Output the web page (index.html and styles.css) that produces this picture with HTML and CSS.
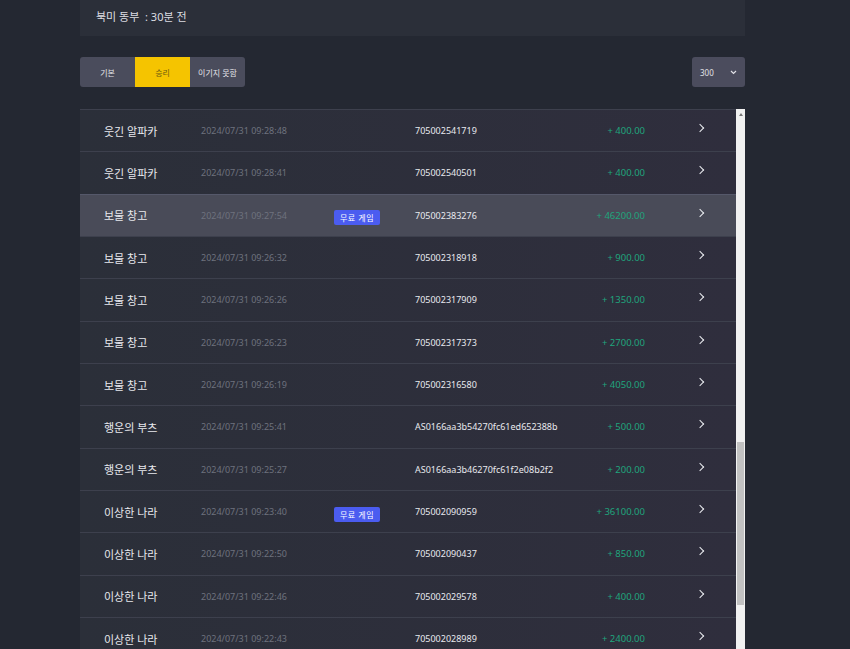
FILE: index.html
```html
<!DOCTYPE html>
<html lang="ko">
<head>
	<meta charset="UTF-8">
	<title>기록</title>
	<link rel="stylesheet" href="styles.css">
</head>
<body>
	<div class="wrap">
		<div class="header">북미 동부&nbsp;&nbsp;: 30분 전</div>

		<div class="toolbar">
			<div class="tabs">
				<div class="tab">기본</div>
				<div class="tab active">승리</div>
				<div class="tab">이기지 못함</div>
			</div>
			<div class="select">
				<span>300</span>
				<svg width="7" height="5" viewBox="0 0 7 5"><path d="M1 1 L3.5 3.5 L6 1" fill="none" stroke="#e0e0e6" stroke-width="1.2"/></svg>
			</div>
		</div>

		<div class="list">
			<div class="rows">
				<div class="row"><span class="name">웃긴 알파카</span><span class="date">2024/07/31 09:28:48</span><span></span><span class="id">705002541719</span><span class="amount">+ 400.00</span><span class="chev"></span></div>
				<div class="row"><span class="name">웃긴 알파카</span><span class="date">2024/07/31 09:28:41</span><span></span><span class="id">705002540501</span><span class="amount">+ 400.00</span><span class="chev"></span></div>
				<div class="row selected"><span class="name">보물 창고</span><span class="date">2024/07/31 09:27:54</span><span><span class="badge">무료 게임</span></span><span class="id">705002383276</span><span class="amount">+ 46200.00</span><span class="chev"></span></div>
				<div class="row"><span class="name">보물 창고</span><span class="date">2024/07/31 09:26:32</span><span></span><span class="id">705002318918</span><span class="amount">+ 900.00</span><span class="chev"></span></div>
				<div class="row"><span class="name">보물 창고</span><span class="date">2024/07/31 09:26:26</span><span></span><span class="id">705002317909</span><span class="amount">+ 1350.00</span><span class="chev"></span></div>
				<div class="row"><span class="name">보물 창고</span><span class="date">2024/07/31 09:26:23</span><span></span><span class="id">705002317373</span><span class="amount">+ 2700.00</span><span class="chev"></span></div>
				<div class="row"><span class="name">보물 창고</span><span class="date">2024/07/31 09:26:19</span><span></span><span class="id">705002316580</span><span class="amount">+ 4050.00</span><span class="chev"></span></div>
				<div class="row"><span class="name">행운의 부츠</span><span class="date">2024/07/31 09:25:41</span><span></span><span class="id">AS0166aa3b54270fc61ed652388b</span><span class="amount">+ 500.00</span><span class="chev"></span></div>
				<div class="row"><span class="name">행운의 부츠</span><span class="date">2024/07/31 09:25:27</span><span></span><span class="id">AS0166aa3b46270fc61f2e08b2f2</span><span class="amount">+ 200.00</span><span class="chev"></span></div>
				<div class="row"><span class="name">이상한 나라</span><span class="date">2024/07/31 09:23:40</span><span><span class="badge">무료 게임</span></span><span class="id">705002090959</span><span class="amount">+ 36100.00</span><span class="chev"></span></div>
				<div class="row"><span class="name">이상한 나라</span><span class="date">2024/07/31 09:22:50</span><span></span><span class="id">705002090437</span><span class="amount">+ 850.00</span><span class="chev"></span></div>
				<div class="row"><span class="name">이상한 나라</span><span class="date">2024/07/31 09:22:46</span><span></span><span class="id">705002029578</span><span class="amount">+ 400.00</span><span class="chev"></span></div>
				<div class="row"><span class="name">이상한 나라</span><span class="date">2024/07/31 09:22:43</span><span></span><span class="id">705002028989</span><span class="amount">+ 2400.00</span><span class="chev"></span></div>
			</div>
			<div class="scrollbar">
				<div class="arrow"></div>
				<div class="thumb"></div>
			</div>
		</div>
	</div>
</body>
</html>
```

FILE: styles.css
```css
html, body {
	height: 100%;
	overflow: hidden;
}
body {
	margin: 0;
	background: #242832;
	font-family: "Noto Sans", "Noto Sans CJK KR", sans-serif;
	color: #e4e5ea;
}
.wrap {
	width: 665px;
	margin-left: 80px;
}

.header {
	height: 36px;
	background: #2b2f39;
	padding-left: 16px;
	display: flex;
	align-items: center;
	font-size: 11px;
	color: #dcdde2;
	padding-bottom: 4px;
	box-sizing: border-box;
}

/* tabs + page size */
.toolbar {
	margin-top: 21px;
	height: 30px;
	display: flex;
	justify-content: space-between;
}
.tabs {
	display: flex;
	border-radius: 3px;
	overflow: hidden;
}
.tab {
	width: 55px;
	display: flex;
	justify-content: center;
	align-items: center;
	background: #4a4c5c;
	font-size: 8px;
	color: #e2e3e8;
}
.tab.active {
	background: #f5c400;
	color: #6b5a10;
}
.select {
	width: 53px;
	background: #4b4c5d;
	border-radius: 3px;
	display: flex;
	justify-content: space-between;
	align-items: center;
	padding: 0 8px;
	box-sizing: border-box;
	font-size: 8px;
	color: #e0e1e6;
}

/* list */
.list {
	margin-top: 22px;
	height: 540px;
	display: flex;
}
.rows {
	flex: 1;
	overflow: hidden;
}
.row {
	height: 42.33px;
	box-sizing: border-box;
	border-top: 1px solid #3d404d;
	background: linear-gradient(90deg, #2b2f39, #2f2e3d);
	padding-left: 24px;
	display: grid;
	grid-template-columns: 97px 133px 81px 150px 80px 60px;
	align-items: center;
}
.row.selected {
	background: #494b58;
	border-top-color: #55586a;
}
.name {
	font-size: 11px;
	color: #e8e9ee;
}
.date {
	font-size: 9px;
	color: #6e727e;
}
.badge {
	display: inline-block;
	background: #4b5cf0;
	color: #fff;
	font-size: 8px;
	padding: 2px 6px;
	border-radius: 2px;
	letter-spacing: 0.5px;
}
.id {
	font-size: 9px;
	color: #e8e9ee;
	white-space: nowrap;
}
.amount {
	font-size: 9.5px;
	color: #1fa57c;
	text-align: right;
}
.chev {
	justify-self: end;
	width: 5px;
	height: 5px;
	border-top: 1.5px solid #eceef2;
	border-right: 1.5px solid #eceef2;
	transform: rotate(45deg);
	margin-right: 2px;
	margin-bottom: 5px;
}

/* drawn scrollbar */
.scrollbar {
	width: 9px;
	background: #f1f1f1;
	display: flex;
	flex-direction: column;
	align-items: center;
}
.arrow {
	margin-top: 4px;
	width: 0;
	height: 0;
	border-left: 2px solid transparent;
	border-right: 2px solid transparent;
	border-bottom: 3px solid #777;
}
.thumb {
	margin-top: 326px;
	width: 7px;
	height: 163px;
	background: #c1c1c1;
}
```
